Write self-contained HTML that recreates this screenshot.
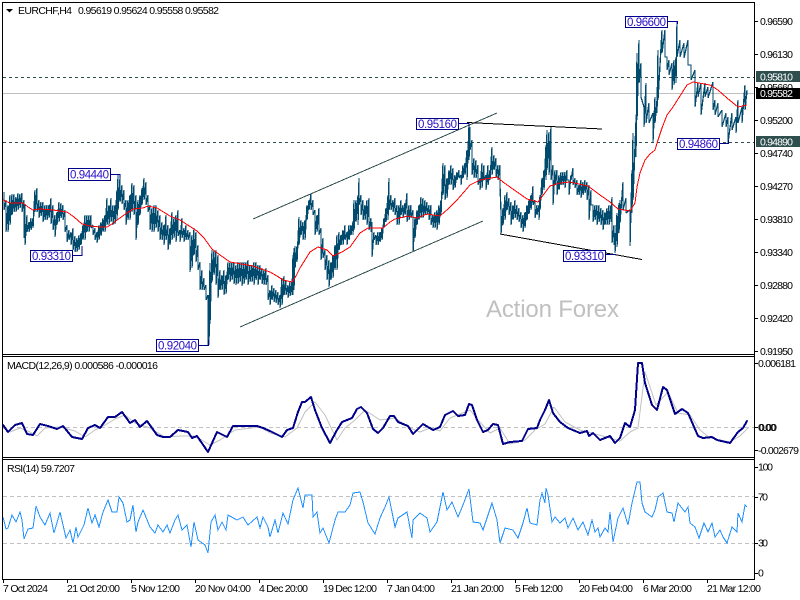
<!DOCTYPE html>
<html>
<head>
<meta charset="utf-8">
<title>EURCHF,H4</title>
<style>
html,body{margin:0;padding:0;background:#fff}
svg{display:block;position:absolute;left:0;top:0}
text{font-family:"Liberation Sans",sans-serif;font-size:10.5px;fill:#000}
.lb{font-size:11.5px;fill:#2a10c8}
</style>
</head>
<body>
<svg width="800" height="600" viewBox="0 0 800 600" xmlns="http://www.w3.org/2000/svg">
<rect width="800" height="600" fill="#fff"/>

<!-- levels -->
<g shape-rendering="crispEdges">
<line x1="3" x2="754" y1="93.5" y2="93.5" stroke="#c0c0c0"/>
<line x1="3" x2="754" y1="77.5" y2="77.5" stroke="#2f4f4f" stroke-dasharray="3 3"/>
<line x1="3" x2="754" y1="142.5" y2="142.5" stroke="#2f4f4f" stroke-dasharray="3 3"/>
<line x1="3" x2="754" y1="427.5" y2="427.5" stroke="#c0c0c0" stroke-dasharray="4 3"/>
<line x1="3" x2="754" y1="496.5" y2="496.5" stroke="#c0c0c0" stroke-dasharray="4 3"/>
<line x1="3" x2="754" y1="543.5" y2="543.5" stroke="#c0c0c0" stroke-dasharray="4 3"/>
</g>

<text x="486" y="317" style="font-size:24px;fill:#c0c0c0" textLength="133">Action Forex</text>

<!-- trend lines -->
<g shape-rendering="crispEdges">
<line x1="253" y1="219" x2="497" y2="113" stroke="#2f4f4f"/>
<line x1="240" y1="327" x2="483" y2="221" stroke="#2f4f4f"/>
<line x1="467" y1="122.5" x2="602" y2="129" stroke="#000"/>
<line x1="500" y1="234" x2="642" y2="259.5" stroke="#000"/>
</g>

<!-- price -->
<polyline fill="none" stroke="#004a6e" stroke-width="1.3" stroke-linejoin="bevel" shape-rendering="crispEdges" points="
4,192 4,210 6,200 6,232 8,205 8,232 10,195 10,225 12,194 12,215 14,194 14,212 16,197 16,212 18,193 18,210 20,194 20,208 22,193 22,212 24,200 24,238 25,205 25,245 27,215 27,232 29,222 29,232 31,218 31,230 33,218 33,228 35,190 35,212 37,188 37,212 39,200 39,218 41,202 41,216 43,202 43,222 45,205 45,220 47,205 47,220 49,205 49,218 51,198 51,224 53,205 53,230 55,215 55,237 57,212 57,225 59,202 59,222 61,203 61,218 63,205 63,220 65,210 65,232 67,225 67,242 69,230 69,240 71,232 71,245 73,228 73,250 75,236 75,252 77,238 77,252 79,235 79,250 81,233 81,245 83,225 83,240 85,215 85,240 87,215 87,232 89,215 89,232 91,215 91,228 93,225 93,235 95,228 95,240 97,232 97,243 99,225 99,240 101,222 101,236 103,218 103,232 105,215 105,232 107,198 107,225 109,205 109,225 111,198 111,222 113,205 113,225 115,205 115,224 117,190 117,220 118,175 118,210 120,178 120,202 122,185 122,204 124,190 124,210 126,200 126,225 128,200 128,220 130,195 130,220 132,183 132,212 134,185 134,215 136,195 136,240 138,200 138,225 140,195 140,215 142,188 142,205 144,178 144,200 146,182 146,205 148,195 148,212 150,205 150,230 152,208 152,232 154,205 154,232 156,205 156,228 158,210 158,232 160,215 160,240 162,222 162,240 164,225 164,245 166,215 166,240 168,225 168,250 170,228 170,245 172,212 172,240 174,218 174,238 176,215 176,242 178,210 178,236 180,230 180,242 182,218 182,238 184,228 184,242 186,225 186,240 188,230 188,240 190,232 190,272 192,235 192,268 194,228 194,255 196,232 196,262 198,245 198,270 200,262 200,290 202,270 202,290 204,278 204,290 206,285 206,300 208,295 208,345 209,295 209,345 210,263 210,324 212,250 212,282 214,250 214,275 216,250 216,285 218,255 218,298 220,270 220,290 222,275 222,290 224,270 224,295 226,275 226,294 228,262 228,280 230,262 230,282 232,262 232,280 234,262 234,284 236,265 236,285 238,262 238,284 240,262 240,282 242,262 242,286 244,262 244,284 246,262 246,280 248,260 248,285 250,265 250,282 252,265 252,282 254,262 254,285 256,262 256,280 258,265 258,285 260,265 260,280 262,268 262,284 264,270 264,285 266,268 266,285 268,275 268,300 270,290 270,305 272,285 272,300 274,288 274,302 276,290 276,303 278,292 278,305 280,295 280,308 282,278 282,305 284,276 284,295 286,280 286,295 288,285 288,298 290,282 290,296 292,282 292,295 293,255 293,295 294,248 294,290 295,246 295,268 297,246 297,262 299,217 299,245 301,220 301,235 303,222 303,240 305,220 305,240 307,205 307,220 309,200 309,210 311,194 311,210 313,200 313,215 315,210 315,235 317,215 317,232 319,208 319,235 321,228 321,260 323,238 323,258 325,250 325,270 327,255 327,280 329,260 329,287 331,262 331,280 333,255 333,278 335,245 335,270 337,235 337,270 339,232 339,250 341,235 341,245 343,230 343,245 345,225 345,240 347,232 347,245 349,225 349,240 351,225 351,235 353,222 353,235 354,200 354,230 356,200 356,222 358,195 358,225 359,178 359,205 361,195 361,215 363,200 363,220 365,205 365,220 367,200 367,225 369,198 369,230 371,218 371,232 372,222 372,257 374,232 374,240 376,235 376,245 378,232 378,245 380,232 380,242 382,228 382,240 384,218 384,228 386,208 386,222 388,195 388,220 389,178 389,210 391,195 391,210 393,200 393,212 395,198 395,215 397,205 397,225 399,205 399,225 401,200 401,215 403,205 403,218 405,203 405,215 407,193 407,222 409,205 409,220 411,205 411,218 413,210 413,252 415,218 415,238 417,210 417,225 419,205 419,220 421,197 421,218 423,198 423,218 425,200 425,215 427,202 427,215 429,205 429,220 431,205 431,225 433,215 433,228 435,212 435,228 437,210 437,230 439,205 439,225 441,200 441,215 443,163 443,195 445,165 445,200 447,178 447,198 449,170 449,185 451,165 451,185 453,168 453,190 455,175 455,188 457,172 457,180 459,170 459,178 461,175 461,185 463,165 463,178 465,163 465,175 467,150 467,180 469,125 469,160 470,127 470,150 472,140 472,175 474,158 474,178 476,160 476,178 478,165 478,185 480,178 480,190 482,163 482,188 484,165 484,180 486,175 486,190 488,165 488,185 490,170 490,180 492,147 492,175 494,155 494,170 496,158 496,178 498,165 498,180 500,165 500,186 501,212 501,234 503,208 503,225 505,195 505,220 507,192 507,210 509,198 509,215 511,202 511,225 513,205 513,220 515,200 515,218 517,205 517,220 519,208 519,222 521,212 521,228 523,215 523,232 525,212 525,228 527,205 527,220 529,200 529,214 531,195 531,210 533,186 533,205 535,200 535,218 537,205 537,215 539,205 539,220 540,195 540,210 542,178 542,195 544,170 544,190 546,145 546,180 547,130 547,170 549,132 549,175 551,127 551,180 553,165 553,205 555,170 555,185 557,170 557,195 559,175 559,190 561,172 561,185 563,172 563,185 565,172 565,188 567,170 567,180 569,180 569,195 571,175 571,180 573,168 573,185 575,178 575,188 577,180 577,195 579,185 579,195 581,180 581,198 583,182 583,195 585,180 585,193 587,182 587,200 589,185 589,220 591,190 591,205 593,205 593,222 595,205 595,220 597,205 597,225 599,205 599,222 601,208 601,225 603,210 603,230 605,212 605,225 607,208 607,225 609,205 609,225 611,205 611,222 612,197 612,243 614,225 614,245 615,233 615,253 617,213 617,247 619,203 619,233 620,200 620,223 623,182 623,210 626,198 626,213 630,210 630,246 632,170 632,213 633,133 633,200 636,120 636,157 637,53 637,120 639,40 639,83 641,63 641,97 644,107 644,127 646,83 646,123 649,103 649,123 653,113 653,142 655,97 655,123 657,100 657,113 658,50 658,100 662,30 662,53 665,30 665,57 667,57 667,70 669,60 669,75 672,63 672,90 674,60 674,85 676,57 676,83 677,21 677,57 680,40 680,57 684,43 684,58 688,40 688,65 691,65 691,80 695,70 695,107 698,83 698,97 701,83 701,115 705,83 705,97 708,87 708,98 713,82 713,110 715,100 715,115 718,103 718,117 722,110 722,127 726,113 726,127 728,117 728,143 732,113 732,130 736,117 736,133 738,100 738,123 742,107 742,123 745,85 745,110 747,90 747,95"/>

<!-- MA -->
<polyline fill="none" stroke="#ff0000" stroke-width="1" shape-rendering="crispEdges" points="3,200 10,203 23,203 28,207 33,210 40,209 53,210 60,211 67,212 74,217 82,224 90,226 100,227 107,227 112,224 117,220 127,213 133,209 143,208 148,206 157,208 170,216 180,220 197,231 204,238 212,249 220,255 230,262 253,266 270,272 277,276 283,280 292,282 296,276 300,268 305,260 310,252 318,247 327,250 333,256 342,252 350,247 355,240 360,233 368,228 383,228 390,222 395,219 408,216 417,218 427,214 440,216 448,209 457,200 464,192 470,185 480,180 497,177 503,182 510,187 527,199 538,202 544,194 550,186 560,183 570,182 588,186 600,195 610,202 618,209 630,211 635,203 637,187 640,173 645,160 650,154 655,150 658,140 662,128 667,115 673,107 680,96 687,85 693,82 710,85 718,90 727,98 738,107 747,105"/>

<!-- Labels with leader lines -->
<g fill="none" stroke="#00008b" shape-rendering="crispEdges">
<path d="M111 174.5H120V178"/>
<path d="M73 255.5H82V246"/>
<path d="M198 345.5H208.5V340"/>
<path d="M459 123.5H469V126"/>
<path d="M667 21.5H677.5V24"/>
<path d="M719 143.5H728.5V140"/>
<path d="M606 254.5H616"/>
</g>
<g fill="#fff" stroke="#00008b" shape-rendering="crispEdges">
<rect x="68.5" y="168.5" width="42" height="12"/>
<rect x="30.5" y="250.5" width="42" height="11"/>
<rect x="156.5" y="339.5" width="42" height="12"/>
<rect x="416.5" y="118.5" width="42" height="11"/>
<rect x="625.5" y="16.5" width="42" height="11"/>
<rect x="677.5" y="138.5" width="42" height="11"/>
<rect x="563.5" y="250.5" width="42" height="11"/>
</g>
<text class="lb" x="70" y="178.5" textLength="39">0.94440</text>
<text class="lb" x="32" y="260" textLength="39">0.93310</text>
<text class="lb" x="158" y="349.5" textLength="39">0.92040</text>
<text class="lb" x="418" y="128" textLength="39">0.95160</text>
<text class="lb" x="627" y="26" textLength="39">0.96600</text>
<text class="lb" x="679" y="148" textLength="39">0.94860</text>
<text class="lb" x="565" y="260" textLength="39">0.93310</text>

<!-- MACD -->
<polyline fill="none" stroke="#c0c0c0" stroke-linejoin="round" points="3,428 10,432 20,428 30,432 37,436 45,428 60,427 75,431 85,437 95,430 105,425 115,419 125,415 135,423 150,428 165,437 180,436 195,436 210,445 220,440 235,430 260,427 270,433 285,437 297,428 305,412 315,402 325,415 337,440 345,428 355,420 365,410 380,420 395,418 410,428 420,432 430,428 440,431 450,418 460,414 470,410 478,420 490,433 500,428 510,444 525,440 535,430 545,424 554,407 565,422 580,430 595,434 610,438 620,441 630,432 638,428 645,372 656,405 668,392 678,413 690,415 700,430 710,438 720,440 730,442 740,436 748,428"/>
<polyline fill="none" stroke="#00008b" stroke-width="2" stroke-linejoin="round" stroke-linecap="round" shape-rendering="crispEdges" points="3,425 8,432 15,425 22,423 27,434 33,435 40,424 48,426 57,429 63,426 72,437 82,439 88,428 95,425 100,428 108,417 115,417 122,412 130,423 135,420 140,427 147,421 157,435 163,437 170,437 178,430 188,432 192,438 197,436 208,452 217,432 227,437 233,426 243,426 257,426 263,428 270,431 282,437 287,430 293,428 298,412 302,402 305,402 311,397 315,410 322,428 330,443 337,430 342,422 352,418 357,409 361,407 367,413 373,429 378,433 383,428 390,416 394,416 398,422 408,426 413,434 423,424 433,430 440,427 445,415 453,411 458,416 465,415 469,404 472,405 477,420 483,432 488,430 493,424 498,425 503,444 510,442 522,441 528,429 537,428 540,420 545,410 549,400 553,413 560,422 568,428 580,433 587,431 589,436 593,433 600,440 610,436 615,443 620,438 625,423 630,427 635,410 638,363 642,363 645,383 652,405 657,410 663,387 667,390 675,414 682,409 688,413 698,436 703,438 712,437 717,440 730,443 738,432 743,428 747,421"/>

<!-- RSI -->
<polyline fill="none" stroke="#1e90ff" stroke-width="1" shape-rendering="crispEdges" points="3,517 6,529 8,528 12,515 16,522 20,512 22,520 24,539 28,529 33,528 36,506 40,517 45,525 50,513 54,533 60,512 66,538 70,530 73,543 76,527 78,537 84,525 88,508 92,523 95,515 99,527 103,512 108,500 112,512 117,512 119,497 123,503 127,522 130,520 133,505 136,532 138,522 143,510 150,527 155,533 158,525 163,532 167,525 170,533 175,520 178,515 182,530 187,525 191,547 194,522 198,540 205,545 208,553 211,522 215,515 218,530 222,522 226,530 228,515 237,520 243,517 248,525 257,517 260,528 263,517 268,527 270,537 275,520 278,533 283,513 288,524 293,500 298,488 303,508 305,495 312,495 313,517 317,512 320,533 323,528 329,543 335,520 338,512 345,512 350,505 353,493 360,492 363,502 368,523 375,534 380,518 385,507 389,497 395,527 398,518 407,512 412,538 413,520 420,513 427,518 430,532 437,522 443,492 447,510 452,502 458,517 463,505 469,489 473,522 480,523 483,530 487,518 492,503 497,520 500,543 505,528 513,530 518,538 523,523 527,508 530,523 537,525 540,500 542,493 545,503 546,488 548,495 552,522 555,517 560,523 565,518 568,528 573,518 578,530 583,522 588,535 592,520 595,532 598,528 600,537 605,528 608,532 610,512 613,542 618,518 623,508 628,525 632,503 637,482 640,482 642,503 645,512 652,517 655,510 658,497 663,493 667,512 672,513 674,522 678,503 685,512 688,507 690,523 695,527 699,538 704,523 708,532 712,523 715,537 720,530 723,537 727,543 732,527 737,532 738,513 742,522 745,505 747,507"/>

<!-- Frame -->
<g stroke="#000" fill="none" shape-rendering="crispEdges">
<path d="M2.5 2.5H754.5V579.5H2.5Z"/>
<path d="M2 354.5H755M2 356.5H755M2 457.5H755M2 459.5H755"/>
<path d="M3.5 580V583M67.5 580V583M131.5 580V583M195.5 580V583M259.5 580V583M323.5 580V583M387.5 580V583M451.5 580V583M515.5 580V583M579.5 580V583M643.5 580V583M707.5 580V583"/>
<path d="M755 21.5H758M755 54.5H758M755 87.5H758M755 120.5H758M755 153.5H758M755 186.5H758M755 219.5H758M755 252.5H758M755 285.5H758M755 318.5H758M755 351.5H758M755 427.5H758M755 363.5H758M755 450.5H758M755 467.5H758M755 497.5H758M755 543.5H758M755 573.5H758"/>
</g>

<!-- Title -->
<path d="M6 9H13L9.5 12.5Z" fill="#000"/>
<text x="18" y="14" textLength="54">EURCHF,H4</text>
<text x="78" y="14" textLength="141">0.95619 0.95624 0.95558 0.95582</text>
<text x="7" y="369" textLength="151">MACD(12,26,9) 0.000586 -0.000016</text>
<text x="7" y="472" textLength="68">RSI(14) 59.7207</text>

<!-- Right axis -->
<g>
<text x="760" y="25" textLength="33">0.96590</text>
<text x="760" y="58" textLength="33">0.96130</text>
<text x="760" y="91" textLength="33">0.95660</text>
<text x="760" y="124" textLength="33">0.95200</text>
<text x="760" y="157" textLength="33">0.94740</text>
<text x="760" y="190" textLength="33">0.94270</text>
<text x="760" y="223" textLength="33">0.93810</text>
<text x="760" y="256" textLength="33">0.93340</text>
<text x="760" y="289" textLength="33">0.92880</text>
<text x="760" y="322" textLength="33">0.92420</text>
<text x="760" y="355" textLength="33">0.91950</text>
<text x="758" y="367" textLength="38">0.006181</text>
<text x="758" y="431" textLength="18">0.00</text>
<text x="759" y="431" textLength="18">0.00</text>
<text x="758" y="454" textLength="41">-0.002679</text>
<text x="758" y="470.5" textLength="15">100</text>
<text x="758" y="500.5" textLength="10">70</text>
<text x="758" y="546.5" textLength="10">30</text>
<text x="758" y="576.5">0</text>
</g>
<g shape-rendering="crispEdges">
<rect x="756" y="71" width="44" height="11" fill="#2f4f4f"/>
<rect x="756" y="136" width="44" height="11" fill="#2f4f4f"/>
<rect x="756" y="88" width="44" height="11" fill="#000"/>
</g>
<text x="760" y="80.5" textLength="33" style="fill:#fff">0.95810</text>
<text x="760" y="145.5" textLength="33" style="fill:#fff">0.94890</text>
<text x="760" y="97" textLength="33" style="fill:#fff">0.95582</text>

<!-- Time axis -->
<text x="3" y="592" textLength="45">7 Oct 2024</text>
<text x="67" y="592" textLength="53">21 Oct 20:00</text>
<text x="131" y="592" textLength="49">5 Nov 12:00</text>
<text x="195" y="592" textLength="56">20 Nov 04:00</text>
<text x="259" y="592" textLength="49">4 Dec 20:00</text>
<text x="323" y="592" textLength="54">19 Dec 12:00</text>
<text x="387" y="592" textLength="48">7 Jan 04:00</text>
<text x="451" y="592" textLength="53">21 Jan 20:00</text>
<text x="515" y="592" textLength="48">5 Feb 12:00</text>
<text x="579" y="592" textLength="54">20 Feb 04:00</text>
<text x="643" y="592" textLength="49">6 Mar 20:00</text>
<text x="707" y="592" textLength="54">21 Mar 12:00</text>
</svg>
</body>
</html>
